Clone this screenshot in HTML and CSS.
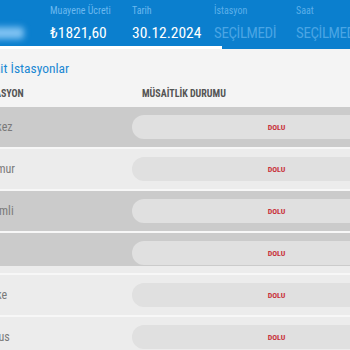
FILE: index.html
```html
<!DOCTYPE html>
<html lang="tr">
<head>
  <meta charset="UTF-8" />
  <meta name="viewport" content="width=device-width, initial-scale=1.0"/>
  <title>Randevu - İstasyon Seçimi</title>
  <link rel="stylesheet" href="styles.css">
</head>
<body>
  <div class="page">
    <div class="header">
      <div class="steps">
        <div class="step">
          <div class="step-label">Plaka</div>
          <div class="step-value"><span class="plate-blur"></span></div>
        </div>
        <div class="step">
          <div class="step-label">Muayene Ücreti</div>
          <div class="step-value">₺1821,60</div>
        </div>
        <div class="step">
          <div class="step-label">Tarih</div>
          <div class="step-value">30.12.2024</div>
        </div>
        <div class="step pending">
          <div class="step-label">İstasyon</div>
          <div class="step-value">SEÇİLMEDİ</div>
        </div>
        <div class="step pending">
          <div class="step-label">Saat</div>
          <div class="step-value">SEÇİLMEDİ</div>
        </div>
      </div>
      <div class="progress"><div class="progress-fill"></div></div>
    </div>

    <h2 class="title">Müsait İstasyonlar</h2>

    <div class="table">
      <div class="row head">
        <div class="cell name">İSTASYON</div>
        <div class="cell status">MÜSAİTLİK DURUMU</div>
      </div>
      <div class="row dark">
        <div class="cell name">Merkez</div>
        <div class="cell status"><span class="pill">DOLU</span></div>
      </div>
      <div class="row">
        <div class="cell name">Anamur</div>
        <div class="cell status"><span class="pill">DOLU</span></div>
      </div>
      <div class="row dark">
        <div class="cell name">Erdemli</div>
        <div class="cell status"><span class="pill">DOLU</span></div>
      </div>
      <div class="row half">
        <div class="cell name">Mut</div>
        <div class="cell status"><span class="pill">DOLU</span></div>
      </div>
      <div class="row">
        <div class="cell name">Silifke</div>
        <div class="cell status"><span class="pill">DOLU</span></div>
      </div>
      <div class="row">
        <div class="cell name">Tarsus</div>
        <div class="cell status"><span class="pill">DOLU</span></div>
      </div>
    </div>
  </div>
</body>
</html>
```
FILE: styles.css
```css
* { margin: 0; padding: 0; box-sizing: border-box; }
body {
  font-family: "Liberation Sans Narrow", "Roboto Condensed", "DejaVu Sans Condensed", Roboto, sans-serif;
  background: #f4f4f4;
  overflow: hidden;
}

.page { margin-left: -32px; width: 520px; }

/* ust adimlar */
.header { background: #0b7fce; }
.steps { display: flex; height: 46px; }
.step { width: 82px; padding-top: 5px; }
.step-label { font-size: 10px; color: #6bb9ef; height: 13px; }
.step-value { font-size: 15.5px; color: #fff; margin-top: 6px; line-height: 18px; white-space: nowrap; }
.step.pending .step-label { color: #5cb0ea; }
.step.pending .step-value { color: #4aa5e4; font-size: 15px; letter-spacing: -0.4px; }

.plate-blur {
  display: inline-block;
  width: 56px; height: 12px;
  margin-top: 3px;
  background: #7fc2f2;
  border-radius: 4px;
  filter: blur(3px);
}

.progress { height: 3px; }
.progress-fill { width: 254px; height: 100%; background: #fff; }

.title {
  font-size: 13.5px; font-weight: normal;
  color: #1b88d3;
  padding-top: 11px;
  margin-left: 3px;
  height: 31px;
}

/* tablo */
.row { display: flex; align-items: center; height: 42px; border-bottom: 2px solid #f7f7f7; background: #ececec; }
.row.head { background: none; border: none; height: 27px; }
.row.dark { background: #cbcbcb; }
.row.half { background: linear-gradient(#cbcbcb 0 33px, #ececec 33px); }

.cell.name { width: 164px; padding-left: 10px; font-size: 12px; color: #7a7a7a; }
.cell.status { flex: 1; }
.head .cell { font-size: 10px; font-weight: bold; color: #555; }
.head .cell.name { padding-left: 14px; }
.head .cell.status { padding-left: 10px; }

.pill {
  display: flex; align-items: center; justify-content: center;
  width: 289px; height: 24px;
  border-radius: 12px;
  background: #e0e0e0;
  color: #c8323c; font-size: 8px; font-weight: bold;
}
```
